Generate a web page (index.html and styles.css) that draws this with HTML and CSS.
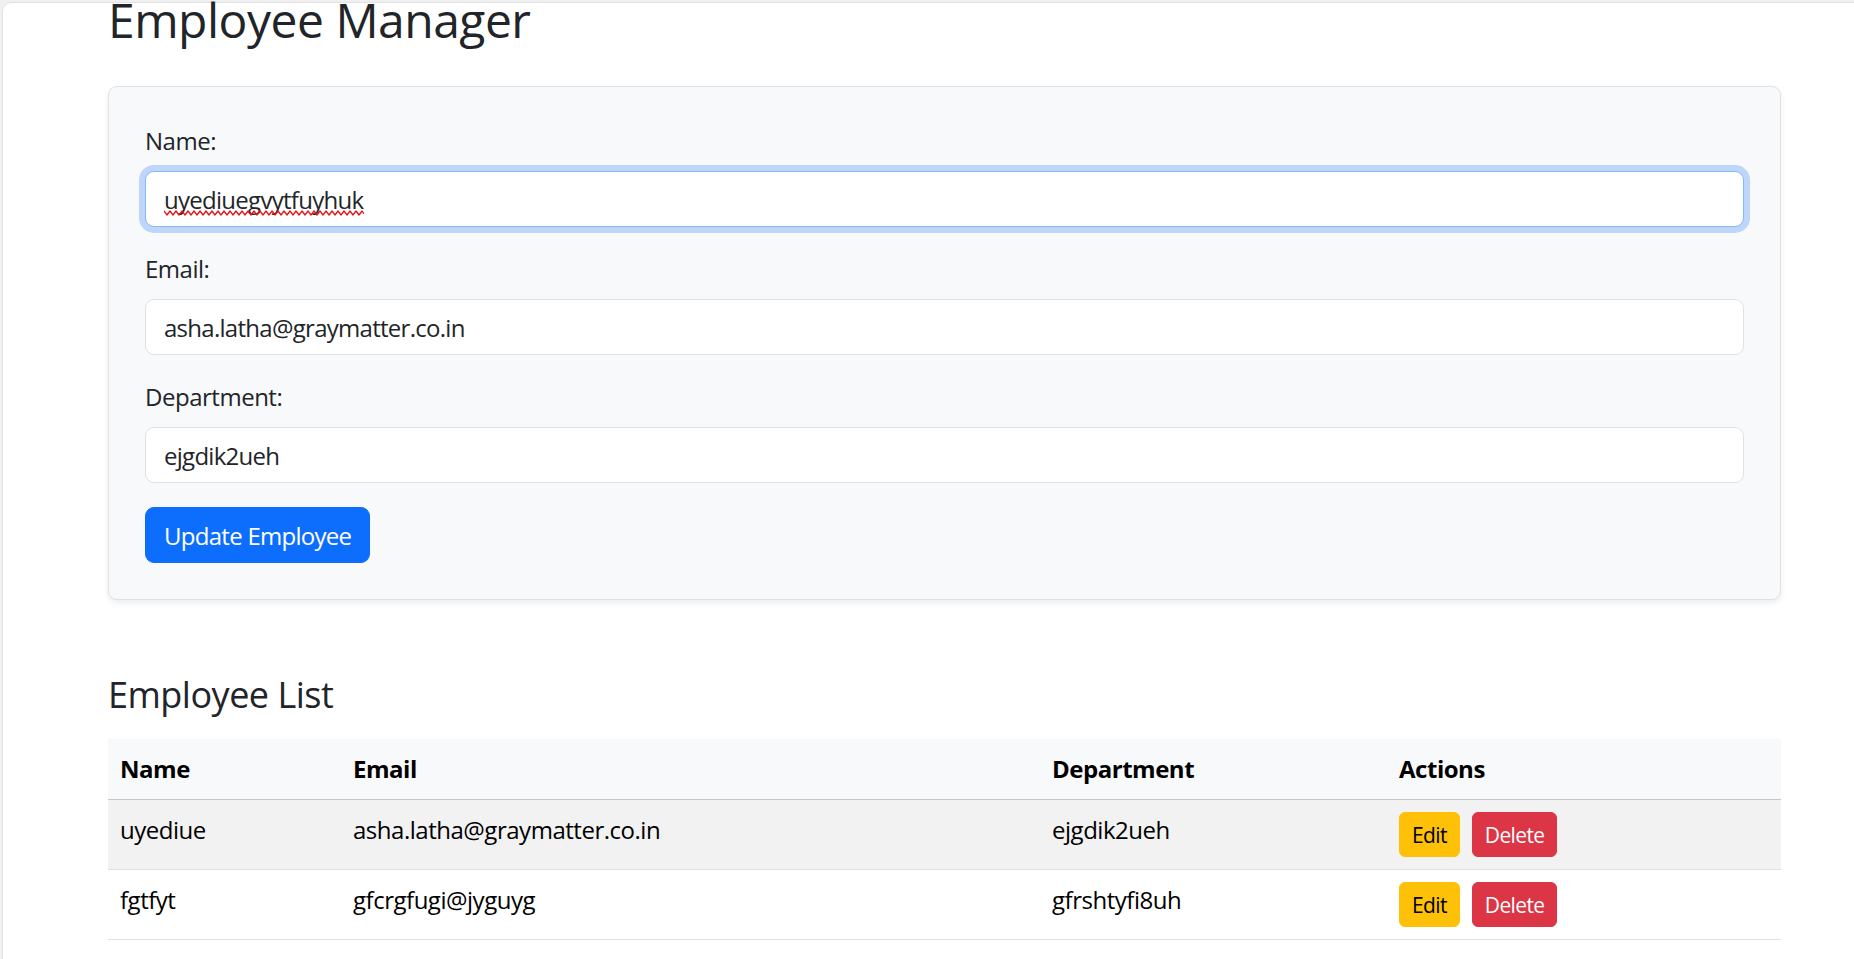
FILE: index.html
```html
<!DOCTYPE html>
<html lang="en">
<head>
<meta charset="utf-8">
<title>Employee Manager</title>
<link rel="stylesheet" href="styles.css">
</head>
<body>
<div class="frame">
  <div class="container">
    <h2 class="page-title">Employee Manager</h2>

    <form class="card">
      <div class="field">
        <label class="field-label" for="name">Name:</label>
        <div class="input-wrap">
          <input class="field-input is-focused" id="name" type="text" value="uyediuegvytfuyhuk">
          <svg class="squiggle" width="200" height="8" viewBox="0 0 200 8" aria-hidden="true">
            <path d="M0 2 L3 6 L6 2 L9 6 L12 2 L15 6 L18 2 L21 6 L24 2 L27 6 L30 2 L33 6 L36 2 L39 6 L42 2 L45 6 L48 2 L51 6 L54 2 L57 6 L60 2 L63 6 L66 2 L69 6 L72 2 L75 6 L78 2 L81 6 L84 2 L87 6 L90 2 L93 6 L96 2 L99 6 L102 2 L105 6 L108 2 L111 6 L114 2 L117 6 L120 2 L123 6 L126 2 L129 6 L132 2 L135 6 L138 2 L141 6 L144 2 L147 6 L150 2 L153 6 L156 2 L159 6 L162 2 L165 6 L168 2 L171 6 L174 2 L177 6 L180 2 L183 6 L186 2 L189 6 L192 2 L195 6 L198 2 L200 5" fill="none" stroke="#e5141b" stroke-width="1.3" stroke-linejoin="round"/>
          </svg>
        </div>
      </div>
      <div class="field">
        <label class="field-label" for="email">Email:</label>
        <input class="field-input" id="email" type="text" value="asha.latha@graymatter.co.in">
      </div>
      <div class="field">
        <label class="field-label" for="dept">Department:</label>
        <input class="field-input" id="dept" type="text" value="ejgdik2ueh">
      </div>
      <button type="button" class="btn btn-primary">Update Employee</button>
    </form>

    <h3 class="section-title">Employee List</h3>

    <table class="emp-table">
      <colgroup>
        <col class="col-name">
        <col class="col-email">
        <col class="col-dept">
        <col class="col-actions">
      </colgroup>
      <thead>
        <tr>
          <th>Name</th>
          <th>Email</th>
          <th>Department</th>
          <th>Actions</th>
        </tr>
      </thead>
      <tbody>
        <tr class="striped">
          <td>uyediue</td>
          <td>asha.latha@graymatter.co.in</td>
          <td>ejgdik2ueh</td>
          <td><div class="actions"><button type="button" class="btn-sm btn-warning">Edit</button><button type="button" class="btn-sm btn-danger">Delete</button></div></td>
        </tr>
        <tr>
          <td>fgtfyt</td>
          <td>gfcrgfugi@jyguyg</td>
          <td>gfrshtyfi8uh</td>
          <td><div class="actions"><button type="button" class="btn-sm btn-warning">Edit</button><button type="button" class="btn-sm btn-danger">Delete</button></div></td>
        </tr>
      </tbody>
    </table>
  </div>
</div>
</body>
</html>
```

FILE: styles.css
```css
html, body {
  margin: 0;
  padding: 0;
  overflow: hidden;
  height: 100%;
}

body {
  background: #f0f0f0;
  font-family: "Open Sans", "Noto Sans", "Liberation Sans", sans-serif;
  color: #212529;
  letter-spacing: -0.03em;
  padding: 2px 0 0 2px;
  box-sizing: border-box;
}

.frame {
  width: 1900px;
  min-height: 1000px;
  background: #ffffff;
  border: 1px solid #e2e2e2;
  border-radius: 9px;
  box-sizing: border-box;
}

.container {
  margin-left: 105px;
  width: 1673px;
}

.page-title {
  font-size: 48px;
  line-height: 40px;
  font-weight: 500;
  letter-spacing: -0.5px;
  margin: -3px 0 46px;
  color: #212529;
}

.card {
  display: block;
  background: #f8f9fa;
  border: 1px solid #dee2e6;
  border-radius: 9px;
  padding: 36px;
  box-shadow: 0 3px 6px rgba(0, 0, 0, 0.075);
  margin: 0;
}

.field {
  margin-bottom: 24px;
}

.field-label {
  display: block;
  font-size: 24px;
  line-height: 36px;
  margin-bottom: 12px;
  color: #212529;
}

.input-wrap {
  position: relative;
}

.field-input {
  display: block;
  width: 100%;
  box-sizing: border-box;
  height: 56px;
  padding: 0 18px;
  font-family: inherit;
  font-size: 24px;
  letter-spacing: -0.03em;
  color: #212529;
  background: #ffffff;
  border: 1px solid #dee2e6;
  border-radius: 9px;
  outline: none;
}

.field-input.is-focused {
  border-color: #86b7fe;
  box-shadow: 0 0 0 6px rgba(13, 110, 253, 0.25);
}

.squiggle {
  position: absolute;
  left: 19px;
  top: 38px;
  pointer-events: none;
}

.btn {
  font-family: inherit;
  font-size: 24px;
  letter-spacing: -0.03em;
  height: 56px;
  padding: 0 18px;
  border: 1px solid transparent;
  border-radius: 9px;
  cursor: pointer;
}

.btn-primary {
  background: #0d6efd;
  border-color: #0d6efd;
  color: #ffffff;
}

.section-title {
  font-size: 36px;
  line-height: 44px;
  font-weight: 500;
  letter-spacing: -0.5px;
  margin: 73px 0 22px;
  color: #212529;
}

.emp-table {
  width: 1673px;
  border-collapse: collapse;
  table-layout: fixed;
  font-size: 24px;
  line-height: 36px;
  color: #000000;
}

.col-name { width: 233px; }
.col-email { width: 699px; }
.col-dept { width: 347px; }

.emp-table th,
.emp-table td {
  padding: 12px;
  text-align: left;
  vertical-align: top;
}

.emp-table thead th {
  background: #f8f9fa;
  font-weight: 700;
  border-bottom: 1px solid #c6c7c8;
}

.emp-table tbody td {
  border-bottom: 1px solid #dee2e6;
}

.emp-table tbody tr.striped td {
  background: #f2f2f2;
}

.actions {
  display: flex;
  gap: 12px;
}

.btn-sm {
  font-family: inherit;
  font-size: 21px;
  letter-spacing: -0.03em;
  height: 45px;
  padding: 0 12px;
  border: 1px solid transparent;
  border-radius: 6px;
  cursor: pointer;
}

.btn-warning {
  background: #ffc107;
  border-color: #ffc107;
  color: #000000;
}

.btn-danger {
  background: #dc3545;
  border-color: #dc3545;
  color: #ffffff;
}
```
